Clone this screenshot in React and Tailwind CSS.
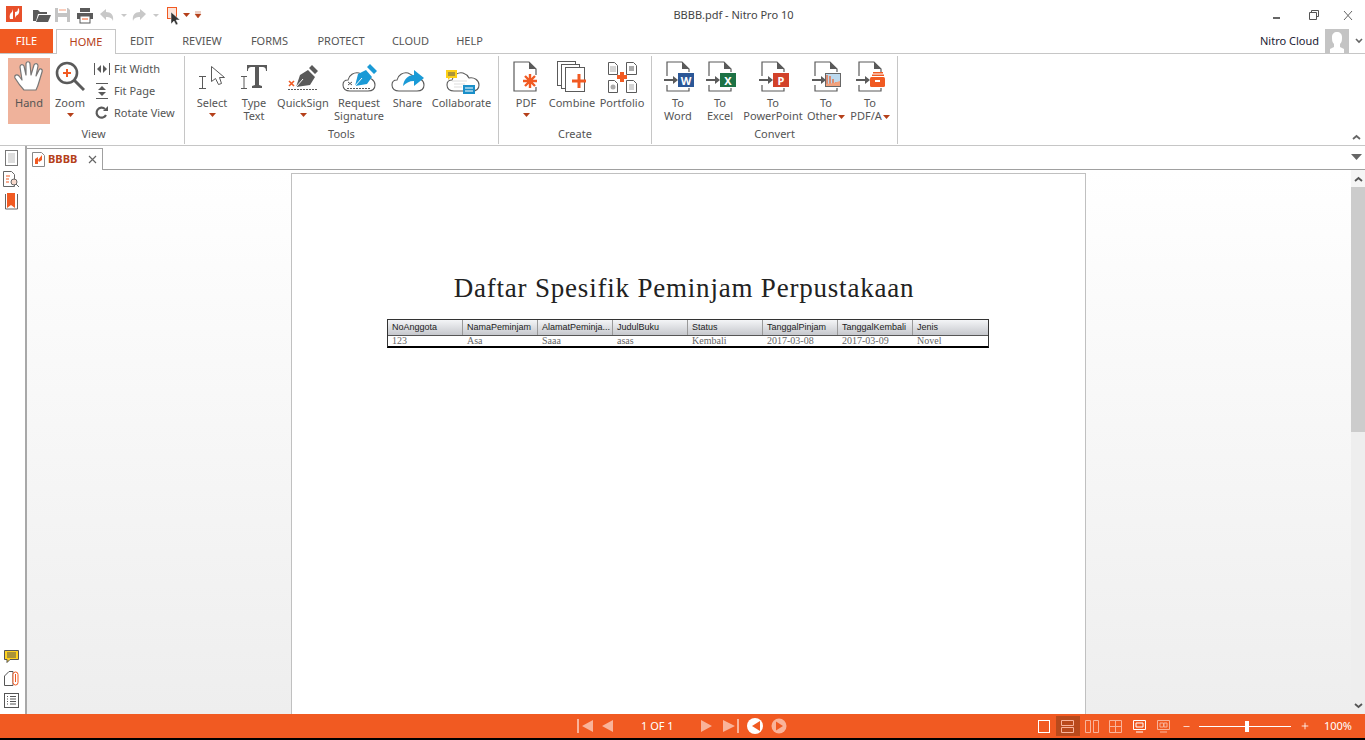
import React from 'react';
import { Minus, Plus } from 'lucide-react';

const UI = 'font-["Noto_Sans",sans-serif]';
const G = '#5a5a5a';
const O = '#f15a22';

const Caret = ({ className = '' }) => (
    <svg width="7" height="4" viewBox="0 0 7 4" className={className}><path d="M0 0h7L3.5 4z" fill="#b5401a" /></svg>
);

// page outline with folded corner used by the convert icons
const ConvertBase = () => {
    const x = 5, y = 2, w = 22, h = 29;
    return (
        <>
            <path d={`M${x} ${y + 14}V${y}H${x + w - 7}L${x + w} ${y + 7}V${y + 10}M${x} ${y + 23}V${y + h}H${x + w}V${y + 26}`} fill="none" stroke={G} strokeWidth="1.2" />
            <path d={`M${x + w - 7} ${y}L${x + w} ${y + 7}H${x + w - 7}z`} fill={G} />
            <path d="M2 20h10" stroke={G} strokeWidth="2" />
            <path d="M11 16l5 4-5 4z" fill={G} />
        </>
    );
};

const ToIcon = ({ color, letter }) => (
    <svg width="32" height="33" viewBox="0 0 32 33">
        <ConvertBase />
        <rect x="16" y="13" width="16" height="14" fill={color} />
        <text x="24" y="24.5" textAnchor="middle" fontSize="11" fontWeight="700" fill="#fff" fontFamily="Noto Sans, sans-serif">{letter}</text>
    </svg>
);

const OtherIcon = () => (
    <svg width="32" height="33" viewBox="0 0 32 33">
        <ConvertBase />
        <rect x="15.5" y="13.5" width="15" height="13" fill="#bcd9ee" stroke="#666" />
        <path d="M17 15v10M20 16v9M23 19v6M26 22v3" stroke="#f15a22" strokeWidth="1.2" />
        <path d="M16 24q7 0 14-3v5H16z" fill="#f2a27c" />
    </svg>
);

const PdfaIcon = () => (
    <svg width="32" height="33" viewBox="0 0 32 33">
        <ConvertBase />
        <rect x="19" y="12" width="10" height="1.500" fill="#f15a22" />
        <rect x="18" y="14.500" width="12" height="1.500" fill="#f15a22" />
        <rect x="16" y="17" width="15" height="10" rx="1.500" fill="#f15a22" />
        <rect x="21" y="20" width="5" height="2" fill="#fff" />
    </svg>
);

const HandIcon = () => (
    <svg width="30" height="32" viewBox="0 0 30 32">
        <path d="M10 30C7 27 4 23 1 18c-1-3 2-4 4-2l3 4L6 7c0-3 3-3 4-1l2 9V4c0-3 4-3 4 0l1 11 3-10c1-2 4-2 4 1l-2 10 3-6c1-2 4-1 3 2l-3 10c-1 4-2 6-3 8z" fill="#fff" stroke="#777" strokeWidth="1.2" strokeLinejoin="round" />
    </svg>
);

const ZoomIcon = () => (
    <svg width="30" height="32" viewBox="0 0 30 32">
        <circle cx="12" cy="13" r="10" fill="#fff" stroke={G} strokeWidth="2.6" />
        <path d="M19 20l10 10" stroke={G} strokeWidth="3" />
        <path d="M12 9v8M8 13h8" stroke={O} strokeWidth="2" />
    </svg>
);

const SelectIcon = () => (
    <svg width="32" height="32" viewBox="0 0 32 32">
        <path d="M3 16.500h7M3 28.500h7M6.500 17v11" stroke={G} fill="none" />
        <path d="M15.500 6.500v15l4-3 3 6 3-1-2-6h5z" fill="#fff" stroke={G} />
    </svg>
);

const TypeTextIcon = () => (
    <svg width="32" height="32" viewBox="0 0 32 32">
        <path d="M3 16.500h6M3 28.500h6M6 17v11" stroke={G} fill="none" />
        <path d="M9 5h20v6h-1c0-3-1-4-4-4h-3v18l3 1v2H14v-2l3-1V7h-3c-3 0-4 1-4 4H9z" fill={G} />
    </svg>
);

const QuickSignIcon = () => (
    <svg width="32" height="32" viewBox="0 0 32 32">
        <path d="M9 27l4-12 8-5 7 7-5 8zM22 8l3-3 6 6-3 3z" fill={G} />
        <path d="M9 27l7-8" stroke="#fff" />
        <path d="M2 21l5 5M7 21l-5 5" stroke={O} strokeWidth="1.6" />
        <path d="M1 29.500h30" stroke={G} strokeDasharray="2 1" />
    </svg>
);

const CloudPath = 'M8 30c-4 0-7-2-7-6 0-3 2-5 5-5 1-5 6-8 11-7 3 1 5 3 6 5 5-1 10 2 10 7 0 4-3 6-7 6z';

const RequestIcon = () => (
    <svg width="36" height="33" viewBox="0 0 36 33">
        <path d={CloudPath} fill="#fff" stroke={G} strokeWidth="1.1" transform="translate(1 1)" />
        <path d="M14 26l3-12 8-4 6 7-5 7zM26 7l3-3 7 7-3 3z" fill="#1a9ad6" />
        <path d="M14 26l7-8" stroke="#fff" />
        <path d="M7 22l4 3M11 22l-4 3" stroke={G} />
        <path d="M6 28.500h24" stroke={G} strokeDasharray="2 1" />
    </svg>
);

const ShareIcon = () => (
    <svg width="36" height="33" viewBox="0 0 36 33">
        <path d={CloudPath} fill="#fff" stroke={G} strokeWidth="1.1" transform="translate(1 1)" />
        <path d="M13 26c1-7 5-11 11-11v-5l10 8-10 8v-5c-5 0-8 2-11 5z" fill="#1a9ad6" />
    </svg>
);

const CollabIcon = () => (
    <svg width="36" height="34" viewBox="0 0 36 34">
        <path d={CloudPath} fill="#fff" stroke={G} strokeWidth="1.1" transform="translate(2 1)" />
        <path d="M8 21h15M10 24h11M10 27h8" stroke="#ddd" />
        <path d="M2 10h11v8H6l-2 2v-2H2z" fill="#fdd017" />
        <path d="M4 13h7M4 15h7" stroke={G} />
        <rect x="19" y="25" width="12" height="9" fill="#1a8fc9" />
        <path d="M21 28h8M21 31h8" stroke="#fff" />
    </svg>
);

const PdfIcon = () => (
    <svg width="32" height="33" viewBox="0 0 32 33">
        <path d="M26 15V9l-7-7H4v29h22v-4" fill="#fff" stroke={G} strokeWidth="1.2" />
        <path d="M19 2l7 7h-7z" fill={G} />
        <path d="M20 14v14M13 21h14M15 16l10 10M25 16L15 26" stroke={O} strokeWidth="2.4" />
    </svg>
);

const CombineIcon = () => (
    <svg width="32" height="33" viewBox="0 0 32 33">
        <rect x="1.500" y="1.500" width="18" height="24" fill="#fff" stroke={G} />
        <rect x="5.500" y="4.500" width="18" height="24" fill="#fff" stroke={G} />
        <rect x="9.500" y="7.500" width="19" height="24" fill="#fff" stroke={G} />
        <path d="M23 14v14M16 21h14" stroke={O} strokeWidth="3" />
    </svg>
);

const PortfolioIcon = () => (
    <svg width="32" height="33" viewBox="0 0 32 33">
        <path d="M2.500 2.500h6l3 3v9h-9zM20.500 2.500h7l3 3v9h-10zM2.500 20.500h6l3 3v9h-9zM20.500 20.500h7l3 3v9h-10z" fill="#fff" stroke={G} />
        <path d="M4 7h6M4 9h6M4 11h6" stroke="#aaa" />
        <rect x="23" y="6" width="5" height="5" fill="#aaa" />
        <circle cx="7" cy="27" r="2.500" fill="#aaa" />
        <path d="M23 25h5M23 27h5M23 29h5" stroke="#aaa" />
        <path d="M16 12v10M11 17h10" stroke={O} strokeWidth="4" />
    </svg>
);

const RibbonButton = ({ w, icon, label, caret, inlineCaret, active }) => (
    <div className={`flex shrink-0 flex-col items-center ${w} ${active ? 'bg-[#efb29b]' : ''} h-[66px] pt-[2px]`}>
        <div className="flex h-[36px] items-start justify-center">{icon}</div>
        <div className="text-center text-[11px] leading-[13px] whitespace-nowrap text-[#555]">
            {label.map((l, i) => (
                <div key={l}>
                    {l}
                    {inlineCaret && i === label.length - 1 && <Caret className="ml-[1px] inline-block align-middle" />}
                </div>
            ))}
        </div>
        {caret && <Caret className="mt-[4px]" />}
    </div>
);

const Group = ({ w, title, children, pl, titleClass = '' }) => (
    <div className={`flex h-[88px] shrink-0 flex-col border-r border-[#c6c6c6] ${w}`}>
        <div className={`flex flex-1 pt-[2px] ${pl}`}>{children}</div>
        <div className={`h-[18px] text-center text-[11px] leading-[16px] text-[#555] ${titleClass}`}>{title}</div>
    </div>
);

const FitRow = ({ icon, label }) => (
    <div className="flex h-[22px] items-center gap-[4px] text-[11px] text-[#555]">
        <span className="flex w-[16px] justify-center">{icon}</span>
        {label}
    </div>
);

const TitleBar = () => (
    <div className="relative flex h-[29px] shrink-0 items-center">
        <svg width="16" height="16" viewBox="0 0 16 16" className="mt-[-1px] ml-[6px]">
            <rect width="16" height="16" fill="#e8502a" />
            <path d="M4 13c-1-3 0-6 2-7l1-3v10zM9 12V6c2 0 3-1 3-4l1 1c1 4-1 6-3 7z" fill="#fff" />
        </svg>
        <svg width="172" height="20" viewBox="0 0 172 20" className="ml-[10px]">
            <path d="M1 16V5h5l2 2h7v2H6l-2 7z" fill={G} />
            <path d="M4 17l3-7h12l-3 7z" fill={G} />
            <path d="M23 3h13l2 2v12H23z" fill="#c4c4c4" />
            <path d="M26 3h9v5h-9zM26 12h9v5h-9z" fill="#fff" />
            <path d="M27 5h7" stroke={O} strokeOpacity=".6" />
            <path d="M48 3h10v4H48zM45 8h16v6H45z" fill={G} />
            <rect x="48" y="11" width="10" height="7" fill="#fff" stroke={G} />
            <path d="M50 14h6" stroke={O} />
            <path d="M68 9l6-5v3c5 0 8 3 7 9-1-3-3-4-7-4v3z" fill="#c8c8c8" />
            <path d="M89 9l3 3 3-3z" fill="#c8c8c8" />
            <path d="M114 9l-6-5v3c-5 0-8 3-7 9 1-3 3-4 7-4v3z" fill="#c8c8c8" />
            <path d="M121 9l3 3 3-3z" fill="#c8c8c8" />
            <rect x="135.500" y="2.500" width="9" height="11" fill="#fbe4da" stroke={O} />
            <path d="M139 7v12l3-3 2 4 2-1-2-4h4z" fill="#333" stroke="#fff" strokeWidth=".5" />
            <path d="M151 8h7l-3.500 4z" fill="#b5401a" />
            <path d="M163 7h6M163 9h6l-3 4z" fill="#b5401a" stroke="#b5401a" strokeWidth=".5" />
        </svg>
        <div className="absolute inset-x-0 top-[7px] pl-[102px] text-center text-[11px] leading-[15px] text-[#444]">BBBB.pdf - Nitro Pro 10</div>
        <div className="ml-auto flex items-center pr-[3px]">
            <span className="h-[2px] w-[7px] translate-y-[3px] bg-[#666]" />
            <svg width="10" height="10" viewBox="0 0 10 10" className="ml-[29px]"><path d="M2.500 2.500V.5h7v6h-2M.5 2.500h7v7h-7z" fill="#fff" stroke="#555" /></svg>
            <svg width="20" height="12" viewBox="0 0 20 12" className="ml-[23px]"><path d="M1 1l8 9M9 1l-8 9" stroke="#666" fill="none" transform="translate(1 1)" /></svg>
        </div>
    </div>
);

const MenuTabs = () => (
    <div className="relative flex h-[25px] shrink-0 border-b border-[#c6c6c6] text-[11px] text-[#555]">
        <div className="flex h-[24px] w-[53px] items-center justify-center bg-[#f15a22] text-white">FILE</div>
        <div className="ml-[3px] flex h-[25px] w-[60px] items-center justify-center border border-b-0 border-[#c6c6c6] bg-white text-[#b5401a]">HOME</div>
        {[['EDIT', 'w-[52px]'], ['REVIEW', 'w-[68px]'], ['FORMS', 'w-[67px]'], ['PROTECT', 'w-[76px]'], ['CLOUD', 'w-[63px]'], ['HELP', 'w-[55px]']].map(([t, w]) => (
            <div key={t} className={`flex items-center justify-center ${w}`}>{t}</div>
        ))}
        <div className="ml-auto flex items-center gap-[6px] pr-[2px] text-[#223]">
            Nitro Cloud
            <svg width="24" height="24" viewBox="0 0 24 24">
                <rect width="24" height="24" fill="#c4c4c4" />
                <path d="M5 24v-4l4-2v-3c-2-2-2-4-2-7 0-3 2-5 5-5s5 2 5 5c0 3 0 5-2 7v3l4 2v4z" fill="#fff" />
            </svg>
            <svg width="8" height="6" viewBox="0 0 8 6"><path d="M1 1l3 3 3-3" fill="none" stroke="#666" strokeWidth="1.6" /></svg>
        </div>
    </div>
);

const Ribbon = () => (
    <div className="relative flex h-[92px] shrink-0 items-start border-b border-[#c6c6c6] pt-[2px]">
        <Group w="w-[185px]" title="View" pl="pl-[8px]" titleClass="pl-[3px]">
            <div className="flex">
                <RibbonButton w="w-[42px]" icon={<HandIcon />} label={['Hand']} active />
                <RibbonButton w="w-[40px]" icon={<ZoomIcon />} label={['Zoom']} caret />
                <div className="ml-[4px] flex flex-col">
                    <FitRow label="Fit Width" icon={<svg width="16" height="14" viewBox="0 0 16 14"><path d="M.5 1v12M15.500 1v12" stroke={G} /><path d="M7 3v8L3 7zM9 3v8l4-4z" fill={G} /></svg>} />
                    <FitRow label="Fit Page" icon={<svg width="14" height="16" viewBox="0 0 14 16"><path d="M1 .5h12M1 15.500h12" stroke={G} /><path d="M3 7h8L7 3zM3 9h8l-4 4z" fill={G} /></svg>} />
                    <FitRow label="Rotate View" icon={<svg width="14" height="14" viewBox="0 0 14 14"><path d="M11 9a5 5 0 1 1-1-6" fill="none" stroke={G} strokeWidth="2.2" /><path d="M8 5h5V0z" fill={G} /></svg>} />
                </div>
            </div>
        </Group>
        <Group w="w-[314px]" title="Tools" pl="pl-[5px]">
            <RibbonButton w="w-[44px]" icon={<SelectIcon />} label={['Select']} caret />
            <RibbonButton w="w-[40px]" icon={<TypeTextIcon />} label={['Type', 'Text']} />
            <RibbonButton w="w-[58px]" icon={<QuickSignIcon />} label={['QuickSign']} caret />
            <RibbonButton w="w-[54px]" icon={<RequestIcon />} label={['Request', 'Signature']} />
            <RibbonButton w="w-[43px]" icon={<ShareIcon />} label={['Share']} />
            <RibbonButton w="w-[65px]" icon={<CollabIcon />} label={['Collaborate']} />
        </Group>
        <Group w="w-[153px]" title="Create" pl="pl-[5px]">
            <RibbonButton w="w-[44px]" icon={<PdfIcon />} label={['PDF']} caret />
            <RibbonButton w="w-[48px]" icon={<CombineIcon />} label={['Combine']} />
            <RibbonButton w="w-[52px]" icon={<PortfolioIcon />} label={['Portfolio']} />
        </Group>
        <Group w="w-[246px]" title="Convert" pl="pl-[5px]">
            <RibbonButton w="w-[42px]" icon={<ToIcon color="#2b5797" letter="W" />} label={['To', 'Word']} />
            <RibbonButton w="w-[42px]" icon={<ToIcon color="#1d7245" letter="X" />} label={['To', 'Excel']} />
            <RibbonButton w="w-[64px]" icon={<ToIcon color="#d2422a" letter="P" />} label={['To', 'PowerPoint']} />
            <RibbonButton w="w-[42px]" icon={<OtherIcon />} label={['To', 'Other']} inlineCaret />
            <RibbonButton w="w-[46px]" icon={<PdfaIcon />} label={['To', 'PDF/A']} inlineCaret />
        </Group>
        <svg width="9" height="6" viewBox="0 0 9 6" className="absolute right-[4px] bottom-[5px]"><path d="M1 5l3.500-3L8 5" fill="none" stroke="#666" strokeWidth="1.8" /></svg>
    </div>
);

const DocTabs = () => (
    <div className="flex h-[24px] shrink-0 border-b border-[#a0a0a0]">
        <div className="mt-[2px] flex h-[22px] w-[76px] items-center border-t border-r border-[#a0a0a0] bg-white pl-[5px]">
            <svg width="13" height="15" viewBox="0 0 13 15">
                <path d="M.5.5h9l3 3v11H.5z" fill="#fff" stroke="#888" />
                <path d="M3 12V7l3-2v7zM6 8l4-5v5l-3 2z" fill={O} />
            </svg>
            <span className="ml-[3px] text-[11px] font-bold text-[#b5401a]">BBBB</span>
            <svg width="9" height="9" viewBox="0 0 9 9" className="ml-[11px]"><path d="M1 1l7 7M8 1L1 8" stroke="#666" strokeWidth="1.2" /></svg>
        </div>
        <svg width="11" height="6" viewBox="0 0 11 6" className="mt-[8px] mr-[3px] ml-auto"><path d="M0 0h11L5.500 6z" fill="#666" /></svg>
    </div>
);

const SideBar = () => (
    <div className="flex w-[27px] shrink-0 flex-col items-center border-r-2 border-[#a8a8a8] bg-white pt-[4px] pr-[3px] pb-[6px]">
        <div className="flex flex-col items-center gap-[5px]">
            <svg width="13" height="16" viewBox="0 0 13 16"><rect x=".5" y=".5" width="12" height="15" fill="#fff" stroke="#777" /><path d="M3 4h7M3 6h7M3 8h7M3 10h7M3 12h7" stroke="#bbb" /></svg>
            <svg width="16" height="17" viewBox="0 0 16 17"><path d="M.5.5h8l3 3v12H.5z" fill="#fff" stroke="#666" /><path d="M3 5h4M3 8h3M3 11h3" stroke={O} /><circle cx="11" cy="11" r="3" fill="#f9d9cb" stroke="#666" /><path d="M13 13l3 3" stroke="#666" /></svg>
            <svg width="13" height="17" viewBox="0 0 13 17"><path d="M.5 1v15h12V1" fill="#fff" stroke="#666" /><path d="M2 0h8v15l-4-3-4 3z" fill={O} /></svg>
        </div>
        <div className="mt-auto flex flex-col items-center gap-[7px]">
            <svg width="15" height="14" viewBox="0 0 15 14"><path d="M.5.5h14v9H6l-3 3v-3H.5z" fill="#ffd21f" stroke="#555" /><path d="M3 3h9M3 5h9M3 7h9" stroke="#555" /></svg>
            <svg width="15" height="15" viewBox="0 0 15 15"><path d="M.5 14.500V5L5 .5h4v14z" fill="#fff" stroke="#555" /><rect x="9" y="1" width="5" height="13" rx="2.500" fill="#fff" stroke={O} /><path d="M11.500 3v8" stroke={O} /></svg>
            <svg width="15" height="15" viewBox="0 0 15 15"><rect x=".5" y=".5" width="14" height="14" fill="#fff" stroke="#555" /><path d="M3 3.500h1M3 6h1M3 8.500h1M3 11h1M6 3.500h6M6 6h6M6 8.500h6M6 11h6" stroke="#555" /></svg>
        </div>
    </div>
);

const columns = [
    ['NoAnggota', '123'],
    ['NamaPeminjam', 'Asa'],
    ['AlamatPeminja...', 'Saaa'],
    ['JudulBuku', 'asas'],
    ['Status', 'Kembali'],
    ['TanggalPinjam', '2017-03-08'],
    ['TanggalKembali', '2017-03-09'],
    ['Jenis', 'Novel'],
];

const DocPage = () => (
    <div className="h-[541px] w-[795px] shrink-0 overflow-hidden border border-b-0 border-[#c0c0c0] bg-white">
        <h1 className='mt-[93px] mr-[9px] text-center font-["Liberation_Serif",serif] text-[27px] leading-[42px] tracking-[0.8px] text-[#222]'>Daftar Spesifik Peminjam Perpustakaan</h1>
        <div className="mt-[10px] ml-[95px] w-[602px] border border-b-2 border-[#333] border-b-black">
            <div className='grid grid-cols-8 bg-gradient-to-b from-[#f4f5f7] to-[#c6c8cd] font-["Liberation_Sans",sans-serif] text-[9px] leading-[14px] text-[#222]'>
                {columns.map(([h]) => (
                    <div key={h} className="h-[15px] border-r border-[#999] pl-[4px] last:border-r-0">{h}</div>
                ))}
            </div>
            <div className='grid h-[11px] grid-cols-8 border-t border-[#555] bg-white font-["Liberation_Serif",serif] text-[10px] leading-[10px] text-[#666]'>
                {columns.map(([h, v]) => (
                    <div key={h} className="pl-[4px]">{v}</div>
                ))}
            </div>
        </div>
    </div>
);

const ScrollBar = () => (
    <div className="flex w-[14px] shrink-0 flex-col bg-[#eeeeee]">
        <div className="flex h-[17px] items-center justify-center bg-[#f5f5f5]">
            <svg width="9" height="6" viewBox="0 0 9 6"><path d="M1 5l3.500-3L8 5" fill="none" stroke="#555" strokeWidth="1.8" /></svg>
        </div>
        <div className="h-[245px] bg-[#cccccc]" />
        <div className="mt-auto flex h-[17px] items-center justify-center">
            <svg width="9" height="6" viewBox="0 0 9 6"><path d="M1 1l3.500 3L8 1" fill="none" stroke="#555" strokeWidth="1.8" /></svg>
        </div>
    </div>
);

const StatusBar = () => (
    <div className="relative flex h-[24px] shrink-0 items-center bg-[#f15a22]">
        <div className="absolute inset-y-0 left-[577px] flex items-center">
            <svg width="220" height="16" viewBox="0 0 220 16">
                <g fill="#f9b39a">
                    <rect x="0" y="1" width="2" height="14" />
                    <path d="M16 2v12L5 8zM36 2v12L25 8zM124 2v12l11-6zM146 2v12l12-6z" />
                    <rect x="160" y="1" width="2" height="14" />
                    <circle cx="202" cy="8" r="7.500" />
                </g>
                <circle cx="178" cy="8" r="8" fill="#fff" />
                <path d="M183 3v10l-8-5z" fill={O} />
                <path d="M199 3.500v9l7-4.500z" fill={O} />
            </svg>
        </div>
        <span className="absolute left-[641px] text-[11px] text-white">1 OF 1</span>
        <div className="ml-auto flex items-center pr-[13px]">
            <span className="flex w-[23px] justify-center"><svg width="12" height="13" viewBox="0 0 12 13"><rect x=".5" y=".5" width="11" height="12" fill="none" stroke="#fff" /></svg></span>
            <span className="flex h-[20px] w-[24px] items-center justify-center bg-[#b94a1c]"><svg width="14" height="13" viewBox="0 0 14 13"><path d="M.5.5h12v5H.5zM.5 7.500h12v5H.5z" fill="none" stroke="#f9b39a" /></svg></span>
            <span className="flex w-[24px] justify-center"><svg width="14" height="13" viewBox="0 0 14 13"><path d="M.5.5h5v12h-5zM8.500.5h5v12h-5z" fill="none" stroke="#f9b39a" /></svg></span>
            <span className="flex w-[24px] justify-center"><svg width="14" height="13" viewBox="0 0 14 13"><path d="M.5.5h12v12H.5zM6.500.5v12M.5 6.500h12" fill="none" stroke="#f9b39a" /></svg></span>
            <span className="flex w-[24px] justify-center"><svg width="14" height="13" viewBox="0 0 14 13"><path d="M.5.5h12v9H.5z" fill="none" stroke="#fff" /><path d="M3 3h7v4H3zM3 12h7" fill="none" stroke="#fff" /></svg></span>
            <span className="flex w-[24px] justify-center"><svg width="14" height="13" viewBox="0 0 14 13"><path d="M.5.5h12v9H.5zM3 3h3.500v4H3zM7 3h3v4H7zM3 12h7" fill="none" stroke="#f9b39a" /></svg></span>
            <Minus size={9} color="#fff" className="ml-[6px]" />
            <div className="relative ml-[8px] h-[1px] w-[92px] bg-white">
                <span className="absolute top-[-5px] left-[46px] h-[11px] w-[4px] bg-white" />
            </div>
            <Plus size={10} color="#fff" className="ml-[9px]" />
            <span className="ml-[14px] text-[11px] text-white">100%</span>
        </div>
    </div>
);

export default function App() {
    return (
        <div className={`flex h-[740px] w-[1365px] flex-col overflow-hidden bg-white ${UI}`}>
            <TitleBar />
            <MenuTabs />
            <Ribbon />
            <div className="flex min-h-0 flex-1">
                <SideBar />
                <div className="flex min-w-0 flex-1 flex-col">
                    <DocTabs />
                    <div className="flex min-h-0 flex-1">
                        <div className="flex min-w-0 flex-1 justify-center bg-gradient-to-b from-white to-[#eeeeee] pt-[3px] pr-[1px]">
                            <DocPage />
                        </div>
                        <ScrollBar />
                    </div>
                </div>
            </div>
            <StatusBar />
            <div className="h-[2px] shrink-0 bg-black" />
        </div>
    );
}
